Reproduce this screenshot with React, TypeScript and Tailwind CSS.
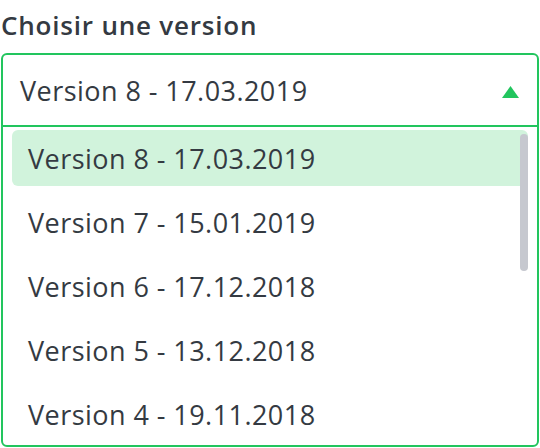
const versions = [
  "Version 8 - 17.03.2019",
  "Version 7 - 15.01.2019",
  "Version 6 - 17.12.2018",
  "Version 5 - 13.12.2018",
  "Version 4 - 19.11.2018",
];

export default function App() {
  const selected = 0;

  return (
    <div className="w-[540px] h-[448px] bg-white text-[#343a42] font-['Open_Sans',sans-serif] overflow-hidden">
      <div className="h-[53px] pl-[1px] pb-[3px] flex items-center">
        <span className="text-[26px] font-semibold leading-none tracking-[0.8px]">
          Choisir une version
        </span>
      </div>
      <div className="ml-px w-[538px] h-[394px] border-2 border-[#22c55e] rounded-[6px] flex flex-col overflow-hidden">
        <div className="h-[72px] shrink-0 pl-[17px] pr-[18px] flex items-center justify-between border-b-2 border-[#22c55e]">
          <span className="text-[27px] leading-none tracking-[0.45px]">{versions[selected]}</span>
          <svg width="17" height="12" viewBox="0 0 17 12" className="mt-[3px]">
            <path d="M8.5 0 L17 12 L0 12 Z" fill="#22c55e" />
          </svg>
        </div>
        <div className="relative flex-1 overflow-hidden px-[9px] pt-[3px]">
          {versions.map((v, i) => (
            <div
              key={v}
              className={
                i === selected
                  ? "h-[56px] mb-[8px] pl-[16px] pt-[3px] flex items-center rounded-[6px] bg-[#d1f3dc] text-[27px] tracking-[0.45px]"
                  : "h-[56px] mb-[8px] pl-[16px] pt-[3px] flex items-center rounded-[6px] text-[27px] tracking-[0.45px]"
              }
            >
              {v}
            </div>
          ))}
          <div className="absolute right-[9px] top-[7px] w-[8px] h-[137px] rounded-full bg-[#c6c8cf]" />
        </div>
      </div>
    </div>
  );
}
